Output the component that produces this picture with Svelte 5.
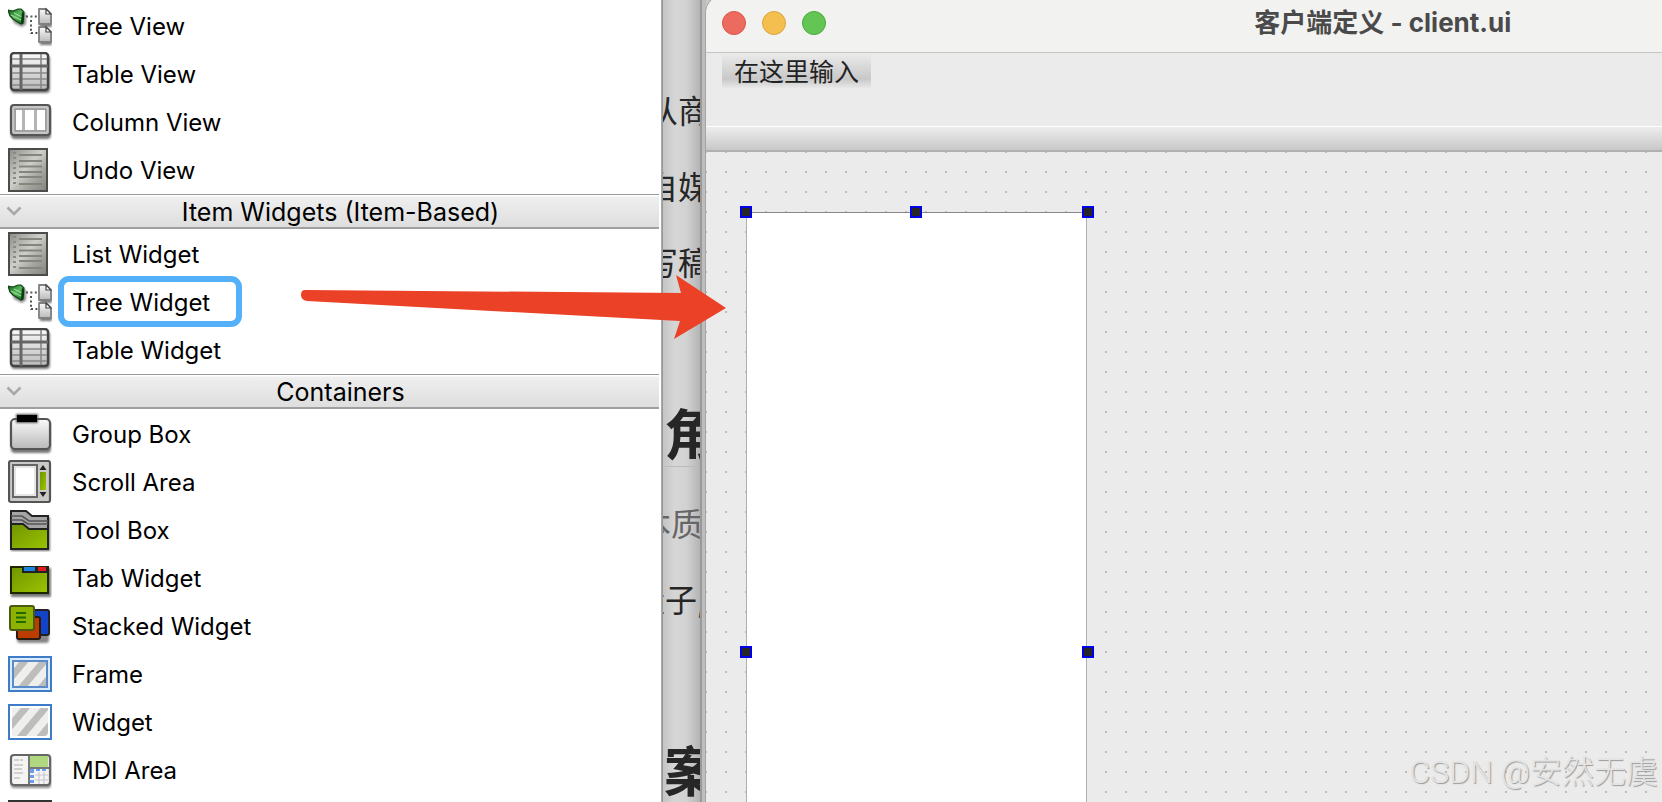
<script>
    let sections = $state([
        {
            title: "",
            open: true,
            items: [
                {label: "Tree View", icon: "tree"},
                {label: "Table View", icon: "table"},
                {label: "Column View", icon: "column"},
                {label: "Undo View", icon: "list"}
            ]
        },
        {
            title: "Item Widgets (Item-Based)",
            open: true,
            items: [
                {label: "List Widget", icon: "list"},
                {label: "Tree Widget", icon: "tree", marked: true},
                {label: "Table Widget", icon: "table"}
            ]
        },
        {
            title: "Containers",
            open: true,
            items: [
                {label: "Group Box", icon: "group"},
                {label: "Scroll Area", icon: "scroll"},
                {label: "Tool Box", icon: "toolbox"},
                {label: "Tab Widget", icon: "tab"},
                {label: "Stacked Widget", icon: "stacked"},
                {label: "Frame", icon: "frame"},
                {label: "Widget", icon: "widget"},
                {label: "MDI Area", icon: "mdi"},
                {label: "", icon: "dock"}
            ]
        }
    ]);

    const handles = ["nw", "n", "ne", "w", "e", "sw", "s", "se"];

    const toggle = section => (section.open = !section.open);
</script>

<!-- shared gradients for the icons -->
<svg class="defs" width="0" height="0" aria-hidden="true">
    <defs>
        <linearGradient id="silver" x1="0" y1="0" x2="0" y2="1">
            <stop offset="0" stop-color="#fafafa" />
            <stop offset="1" stop-color="#b9b9b9" />
        </linearGradient>
        <linearGradient id="steel" x1="0" y1="0" x2="1" y2="1">
            <stop offset="0" stop-color="#8c8c88" />
            <stop offset="0.45" stop-color="#cfcfca" />
            <stop offset="0.7" stop-color="#a5a5a0" />
            <stop offset="1" stop-color="#84847f" />
        </linearGradient>
        <linearGradient id="lime" x1="0" y1="0" x2="1" y2="1">
            <stop offset="0" stop-color="#6f9400" />
            <stop offset="1" stop-color="#9cc400" />
        </linearGradient>
        <linearGradient id="leaf" x1="0" y1="0" x2="1" y2="1">
            <stop offset="0" stop-color="#0c5a14" />
            <stop offset="0.5" stop-color="#5cb45c" />
            <stop offset="1" stop-color="#0a6a14" />
        </linearGradient>
        <pattern id="stripes" width="15" height="15" patternUnits="userSpaceOnUse" patternTransform="rotate(40)">
            <rect width="15" height="15" fill="#efefed" />
            <rect width="7" height="15" fill="#bdbdbb" />
        </pattern>
        <filter id="soft" x="-20%" y="-20%" width="140%" height="140%">
            <feGaussianBlur stdDeviation="1.2" />
        </filter>
    </defs>
</svg>

{#snippet sheet(y)}
    <path d="M31 {y}h7l5 5v11h-12z" fill="#777" filter="url(#soft)" transform="translate(1 2)" />
    <path d="M31 {y}h7l5 5v10h-12z" fill="url(#silver)" stroke="#808080" stroke-width="1.8" stroke-linejoin="round" />
    <path d="M38 {y}v5h5z" fill="#fff" stroke="#444" stroke-width="1.2" />
{/snippet}

{#snippet icon(name)}
    <svg class="icon" viewBox="0 0 44 44" aria-hidden="true">
        {#if name === "tree"}
            <path d="M2 8l12 0 4 2v10l-4 3-8-4z" fill="#888" filter="url(#soft)" />
            <path d="M0 6l5 1 5-2h3l3 3-1 11-2 1-8-5-3-3z" fill="url(#leaf)" stroke="#0b4312" stroke-width="1.2" />
            <path d="M3 11l10 5M6 9l8 4" stroke="#94dc94" stroke-width="1.2" />
            <path d="M14 8l2 1-1 10-2 1z" fill="#0a3a10" />
            <path d="M18 12.5h12M23 16v14M23 29h7" fill="none" stroke="#555" stroke-width="2" stroke-dasharray="2 2.4" />
            {@render sheet(5)}
            {@render sheet(23)}
        {:else if name === "table"}
            <rect x="3" y="3" width="39" height="38" rx="4" fill="#777" filter="url(#soft)" />
            <rect x="3" y="1" width="37" height="37" rx="3" fill="url(#silver)" stroke="#444" stroke-width="2.4" />
            <path d="M4 7h35M4 21h35M4 27h35M4 33h35M33 2v35" stroke="#888" stroke-width="1.6" />
            <path d="M3 14h37M13 2v36" stroke="#666" stroke-width="3" />
        {:else if name === "column"}
            <rect x="3" y="7" width="40" height="32" rx="4" fill="#777" filter="url(#soft)" />
            <rect x="3" y="5" width="39" height="30" rx="3" fill="#c6c6c6" stroke="#555" stroke-width="2.2" />
            <rect x="7" y="9" width="31" height="22" fill="#b4b4b4" stroke="#888" />
            <path d="M8 10h6v20h-6zM17 10h9v20h-9zM29 10h8v20h-8z" fill="#fff" />
        {:else if name === "list"}
            <rect x="1" y="1" width="38" height="42" fill="url(#steel)" stroke="#4c4c4a" stroke-width="2" />
            <path d="M5 5h3M5 10h3M5 15h3M5 20h3M5 25h3M5 30h3M5 35h3" stroke="#8a8a86" stroke-width="2" />
            <path d="M11 7h23M11 13h23M11 18.500h23M11 24h23M11 29h23M11 36h23" stroke="#85857f" stroke-width="2.200" />
        {:else if name === "group"}
            <rect x="3" y="9" width="40" height="32" rx="4" fill="#777" filter="url(#soft)" />
            <rect x="3" y="7" width="39" height="30" rx="4" fill="url(#silver)" stroke="#555" stroke-width="2.2" />
            <rect x="8" y="2" width="22" height="9" fill="#555" filter="url(#soft)" />
            <rect x="9" y="3" width="20" height="7" fill="#000" />
        {:else if name === "scroll"}
            <rect x="1" y="1" width="41" height="41" rx="2" fill="#c9c9c7" stroke="#555" stroke-width="2.2" />
            <rect x="5" y="5" width="24" height="32" fill="#fff" stroke="#666" stroke-width="2" />
            <rect x="7" y="7" width="20" height="28" fill="#fff" stroke="#ccc" />
            <path d="M35 5l3.500 5h-7zM35 37l3.500-5h-7z" fill="#222" />
            <rect x="32" y="12" width="6" height="18" fill="url(#lime)" />
        {:else if name === "toolbox"}
            <rect x="3" y="9" width="39" height="34" fill="#777" filter="url(#soft)" />
            <path d="M3 3h15l6 5h16v32h-37z" fill="#a5a5a5" stroke="#222" stroke-width="2" />
            <path d="M3 8h11l7 5h19M3 12h11l6 4h20" fill="none" stroke="#555" stroke-width="1.6" />
            <path d="M3 16h12l6 5h19v20h-37z" fill="url(#lime)" stroke="#222" stroke-width="2" />
        {:else if name === "tab"}
            <rect x="3" y="12" width="40" height="29" fill="#777" filter="url(#soft)" />
            <rect x="3" y="11" width="37" height="26" fill="url(#lime)" stroke="#1c2600" stroke-width="2" />
            <path d="M14 11h26v6h-26z" fill="#222" />
            <path d="M16 11h11v4h-11z" fill="#1c84dc" />
            <path d="M30 11h8v4h-8z" fill="#e01c1c" />
        {:else if name === "stacked"}
            <rect x="9" y="13" width="32" height="26" rx="3" fill="#888" filter="url(#soft)" />
            <rect x="19" y="6" width="22" height="25" rx="2" fill="#1344c8" stroke="#222" stroke-width="2" />
            <rect x="9" y="13" width="23" height="22" rx="2" fill="#bd3c00" stroke="#2a1a10" stroke-width="2" />
            <rect x="2" y="2" width="24" height="24" rx="2" fill="#8db300" stroke="#4a5a10" stroke-width="2" />
            <path d="M8 9h10M8 13.500h10M8 18h10" stroke="#1f6a00" stroke-width="2" />
        {:else if name === "frame"}
            <rect x="1" y="5" width="42" height="34" fill="#dcebfb" stroke="#3c7cc8" stroke-width="2" />
            <rect x="5" y="9" width="34" height="26" fill="url(#stripes)" stroke="#5a8ccc" stroke-width="2" />
        {:else if name === "widget"}
            <rect x="1" y="5" width="42" height="34" fill="#fff" stroke="#3c7cc8" stroke-width="2" />
            <rect x="4" y="8" width="36" height="28" fill="url(#stripes)" />
        {:else if name === "mdi"}
            <rect x="3" y="8" width="40" height="32" rx="3" fill="#888" filter="url(#soft)" />
            <rect x="3" y="7" width="39" height="30" rx="3" fill="#f4f4f2" stroke="#666" stroke-width="2.200" />
            <path d="M6 12h5M12 12h3M6 17h9M6 21h8M6 25h9M6 30h6" stroke="#c4c4c4" stroke-width="1.6" />
            <path d="M22 8h18v11h-18z" fill="#b0d880" />
            <path d="M21 8v28M21 20h20" stroke="#777" stroke-width="2" />
            <path d="M22 22h18" stroke="#6c9cec" stroke-width="2" stroke-dasharray="4 2" />
            <path d="M24 22v14" stroke="#6c9cec" stroke-width="4" stroke-dasharray="3 2" />
            <path d="M27 27h13M27 32h13M31 24v12M36 24v12" stroke="#c8c8d0" stroke-width="1.200" />
        {:else}
            <path d="M0 4h44v40h-44z" fill="#333" />
        {/if}
    </svg>
{/snippet}

<div class="desktop">
    <aside class="widget-box">
        {#each sections as section}
            {#if section.title}
                <button class="section-title" aria-expanded={section.open} onclick={() => toggle(section)}>
                    <svg class="chevron" viewBox="0 0 16 10" aria-hidden="true">
                        <path d="M1.500 1.500l6.500 6.500 6.500-6.500" fill="none" stroke="#a8a8a8" stroke-width="2.600" />
                    </svg>
                    <span>{section.title}</span>
                </button>
            {/if}
            {#if section.open}
                <ul>
                    {#each section.items as item}
                        <li>
                            {@render icon(item.icon)}
                            <span class="label" class:marked={item.marked}>{item.label}</span>
                        </li>
                    {/each}
                </ul>
            {/if}
        {/each}
    </aside>

    <div class="page-behind">
        <div class="page-text">
            <p>从商</p>
            <p>自媒</p>
            <p>写稿</p>
            <h2>角</h2>
            <p class="quote">本质</p>
            <p class="wide">量子,</p>
            <h2>案</h2>
        </div>
    </div>

    <main class="form-window">
        <header class="title-bar">
            <div class="lights">
                <button class="light red" aria-label="Close"></button>
                <button class="light yellow" aria-label="Minimize"></button>
                <button class="light green" aria-label="Zoom"></button>
            </div>
            <h1>客户端定义 - client.ui</h1>
        </header>
        <nav class="menu-bar">
            <button class="menu-item">在这里输入</button>
        </nav>
        <div class="tool-bar"></div>
        <div class="canvas">
            <div class="tree-widget">
                {#each handles as handle}
                    <i class="handle {handle}"></i>
                {/each}
            </div>
        </div>
    </main>

    <svg class="arrow" viewBox="0 0 426 64" aria-hidden="true">
        <path d="M5 15L381 18L376 0L426 33L374 64L380 46L7 26Q1 25 1 20Q1 15 5 15z" fill="#eb4127" />
    </svg>

    <div class="watermark">CSDN @安然无虞</div>
</div>

<style>
    :global(body) {
        margin: 0;
        background: #ebebeb;
    }

    .desktop {
        position: relative;
        display: grid;
        grid-template-columns: minmax(240px, 662px) 44px minmax(480px, 1fr);
        height: 100vh;
        background: #c8c8c8;
        font-family: Inter, "Noto Sans CJK SC", sans-serif;
        overflow: hidden;
    }

    .defs {
        position: absolute;
    }

    button {
        margin: 0;
        padding: 0;
        border: 0;
        font: inherit;
        color: inherit;
    }

    /* widget box */
    .widget-box {
        box-sizing: border-box;
        padding: 2px 2px 0 0;
        border-right: 1px solid #a9a9a9;
        background: #fff;
        color: #000;
        font-size: 24px;
        line-height: 28px;
        overflow: hidden;
    }

    .section-title {
        box-sizing: border-box;
        display: flex;
        align-items: center;
        width: 100%;
        height: 35px;
        margin-bottom: 1px;
        padding-left: 6px;
        border-top: 1px solid #999;
        border-bottom: 2px solid #a0a0a0;
        background: linear-gradient(#fff 0, #fff 1px, #efefef 2px, #dedede 100%);
        font-size: 25px;
    }

    .section-title span {
        flex: 1;
        padding-top: 2px;
        text-align: center;
    }

    .chevron {
        width: 16px;
        height: 10px;
    }

    ul {
        margin: 0;
        padding: 0;
        list-style: none;
    }

    li {
        display: flex;
        align-items: center;
        gap: 20px;
        height: 48px;
        padding-left: 8px;
    }

    .icon {
        flex: none;
        width: 44px;
        height: 44px;
    }

    .label {
        position: relative;
        padding-top: 2px;
        white-space: nowrap;
    }

    .marked::after {
        content: "";
        position: absolute;
        inset: -11px -32px -10px -14px;
        border: 6px solid #55b0fa;
        border-radius: 11px;
    }

    /* strip of the page between the two windows */
    .page-behind {
        box-sizing: border-box;
        border-left: 1px solid #999;
        border-right: 4px solid #bdbdbd;
        background: linear-gradient(90deg, #c4c4c4, #d6d6d6 30%, #d2d2d2 60%, #b0b0b0);
        color: #262626;
        overflow: hidden;
    }

    .page-text {
        padding-top: 74px;
        border-right: 2px solid #999;
        white-space: nowrap;
        overflow: hidden;
    }

    .page-text p {
        margin: 0 0 0 -17px;
        font-size: 32px;
        font-weight: 400;
        line-height: 76px;
    }

    .page-text .quote {
        margin: 20px 0 0 -24px;
        color: #666;
    }

    .page-text .wide {
        margin-left: -30px;
    }

    .page-text h2 {
        margin: 94px 0 0;
        padding-left: 1px;
        border-bottom: 1px solid #bbb;
        font-size: 54px;
        font-weight: 700;
        line-height: 60px;
        padding-top: 10px;
    }

    /* form window, its top edge is just above the screen */
    .form-window {
        display: flex;
        flex-direction: column;
        min-width: 0;
        margin-top: -6px;
        border-top-left-radius: 20px;
        background: #ebebeb;
        box-shadow: 0 0 0 1px #a4a4a4;
        overflow: hidden;
    }

    /* the window runs past the right edge of the screen */
    .title-bar {
        box-sizing: border-box;
        display: grid;
        grid-template-columns: 1fr auto 1fr;
        align-items: center;
        width: 142%;
        height: 59px;
        padding: 0 20px 0 16px;
        border-bottom: 1px solid #c4c4c4;
        background: #f2f2f0;
    }

    .lights {
        display: flex;
        gap: 16px;
    }

    .light {
        box-sizing: border-box;
        width: 24px;
        height: 24px;
        border: 1px solid;
        border-radius: 50%;
    }

    .red {
        border-color: #d8544a;
        background: #ed6a5f;
    }

    .yellow {
        border-color: #dba33f;
        background: #f5bf4f;
    }

    .green {
        border-color: #4aa93c;
        background: #62c554;
    }

    h1 {
        margin: 0;
        color: #4a4a4a;
        font-size: 26px;
        font-weight: 700;
        line-height: 36px;
    }

    .menu-bar {
        height: 73px;
        padding-left: 16px;
    }

    .menu-item {
        box-sizing: border-box;
        height: 36px;
        padding: 3px 12px 0;
        background: linear-gradient(#ebebeb, #c8c8c8 72%, #ebebeb);
        color: #222;
        font-size: 25px;
        line-height: 33px;
    }

    .tool-bar {
        box-sizing: border-box;
        height: 26px;
        border-top: 1px solid #fff;
        border-bottom: 2px solid #b0b0b0;
        background: linear-gradient(#ededed, #c8c8c8);
    }

    .canvas {
        position: relative;
        flex: 1;
        background-image: conic-gradient(from 90deg at 18px 18px, #bdbdbd 90deg, transparent 0);
        background-position: 1px 1px;
        background-size: 20px 20px;
        overflow: hidden;
    }

    .tree-widget {
        position: absolute;
        top: 60px;
        left: 40px;
        box-sizing: border-box;
        width: 341px;
        height: 880px;
        border: 1px solid #b0b0b0;
        border-top-color: #888;
        background: #fff;
    }

    .handle {
        position: absolute;
        top: calc(50% - 6px);
        left: calc(50% - 7px);
        box-sizing: border-box;
        width: 12px;
        height: 12px;
        border: 2px solid #0000e8;
        background: #262626;
    }

    .nw, .n, .ne {
        top: -7px;
    }

    .sw, .s, .se {
        top: calc(100% - 6px);
    }

    .nw, .w, .sw {
        left: -7px;
    }

    .ne, .e, .se {
        left: calc(100% - 4px);
    }

    .arrow {
        position: absolute;
        top: 275px;
        left: 300px;
        width: 426px;
        height: 64px;
    }

    .watermark {
        position: absolute;
        right: 4px;
        bottom: 6px;
        color: #e4e4e4;
        font-family: Roboto, "Noto Sans CJK SC", sans-serif;
        font-size: 32px;
        font-weight: 300;
        line-height: 48px;
        text-shadow: 1px 1px 1px #999;
    }
</style>
